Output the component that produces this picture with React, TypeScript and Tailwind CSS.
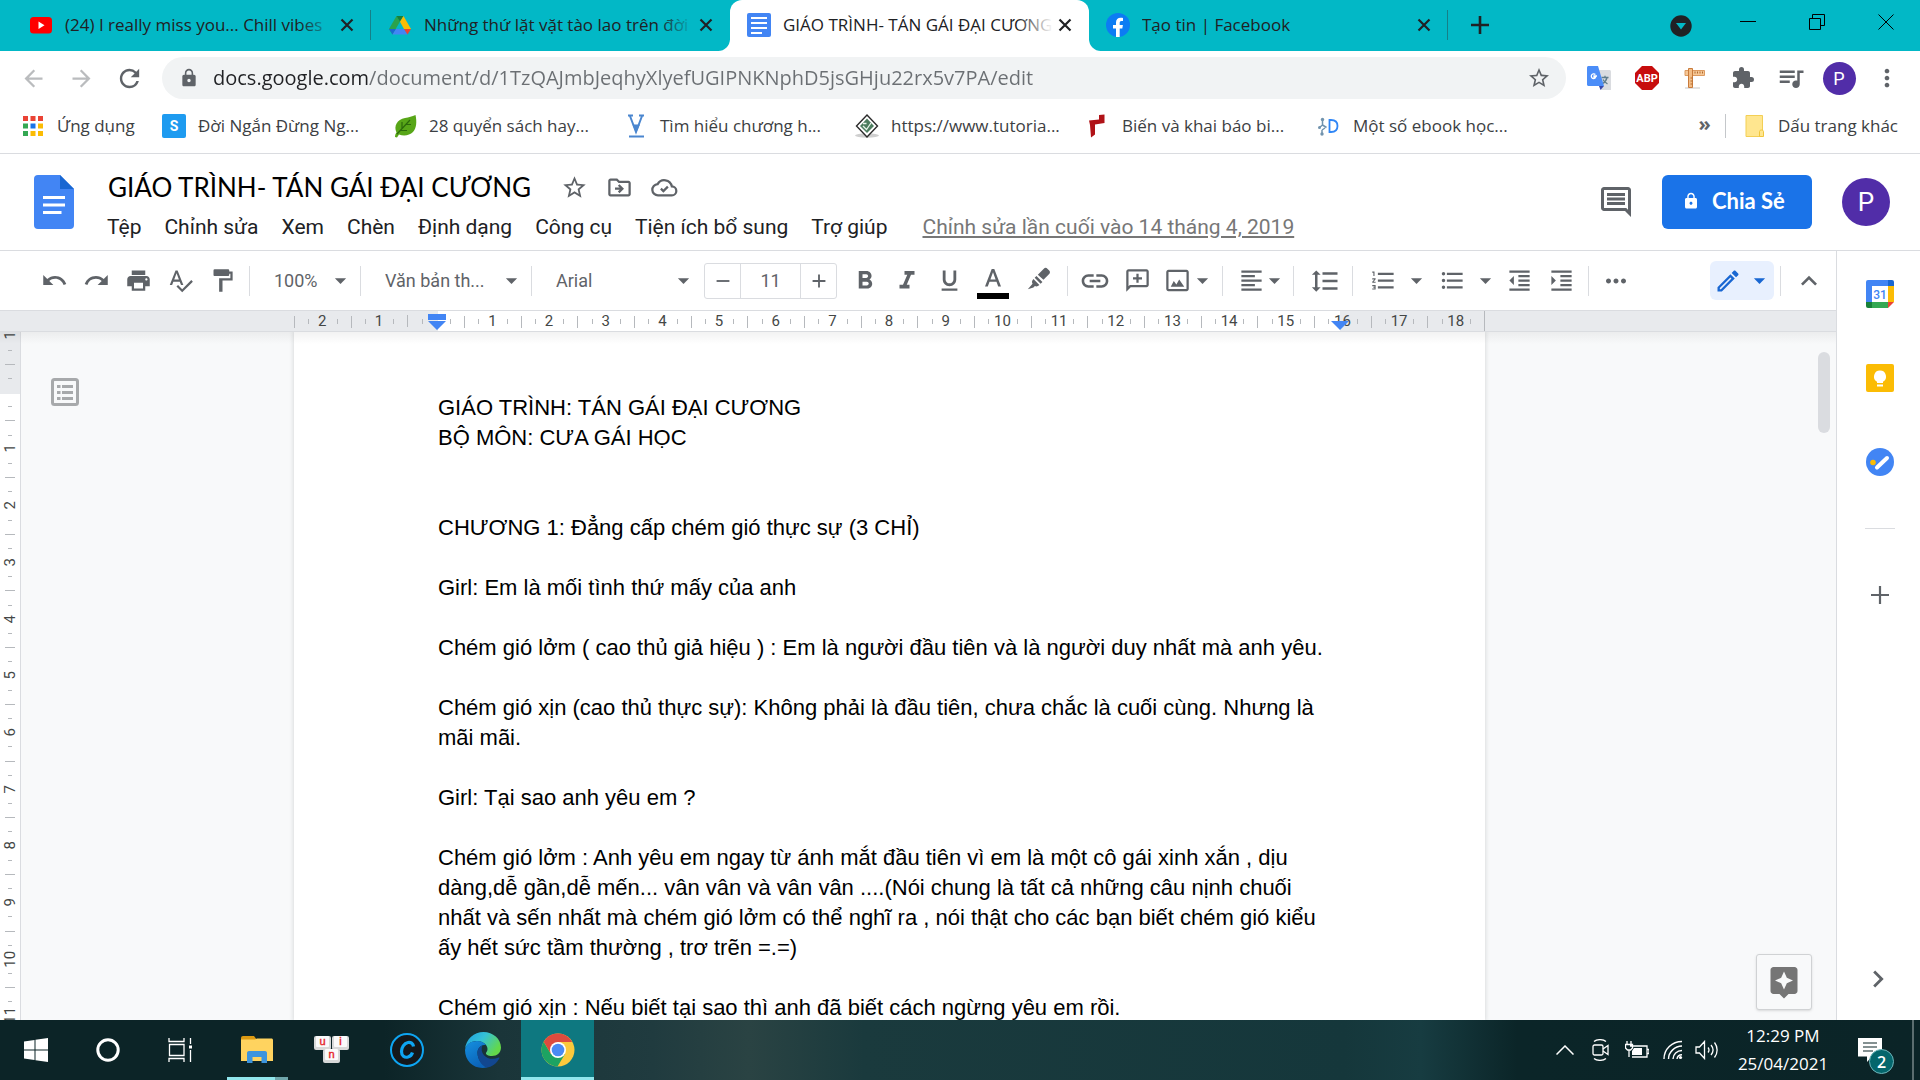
import React from "react";
import {
  MdAdd, MdArrowBack, MdArrowDropDown, MdArrowForward, MdAssistant, MdChevronRight, MdExpandLess,
  MdExtension, MdFormatAlignLeft, MdFormatBold, MdFormatIndentDecrease, MdFormatIndentIncrease, MdFormatItalic,
  MdFormatLineSpacing, MdFormatListBulleted, MdFormatListNumbered, MdFormatUnderlined, MdLink,
  MdLock, MdMoreHoriz, MdMoreVert, MdOutlineDriveFileMove, MdOutlineEdit,
  MdOutlineInsertComment, MdPrint, MdQueueMusic, MdRedo, MdRefresh, MdRemove, MdSpellcheck,
  MdStarBorder, MdUndo,
} from "react-icons/md";

const DocsMark = ({ className }: { className?: string }) => (
  <svg viewBox="0 0 24 24" className={className}>
    <rect width="24" height="24" rx="2" fill="#4285f4" />
    <path d="M4 5h16M4 10h16M4 15h16M4 20h11" stroke="#fff" strokeWidth="2.2" />
  </svg>
);

const YouTube = () => (
  <svg viewBox="0 0 24 24" className="size-6">
    <rect x="1" y="4" width="22" height="16.500" rx="3.500" fill="#f00" />
    <path d="M9.500 8.500v7.500l6-3.750z" fill="#fff" />
  </svg>
);

const Drive = () => (
  <svg viewBox="0 0 24 24" className="size-6">
    <path d="M8.500 3 1 16l3.500 5.500L12 8.500z" fill="#2ba24c" />
    <path d="M8.500 3h7L12 8.800z" fill="#188038" />
    <path d="M15.500 3 23 16h-7L12 8.800z" fill="#fbbc04" />
    <path d="M1 16h7l-3.500 5.500z" fill="#1967d2" />
    <path d="M8 16h8l3.500 5.500h-15z" fill="#4285f4" />
    <path d="M16 16h7l-3.500 5.500z" fill="#ea4335" />
  </svg>
);

const Facebook = () => (
  <svg viewBox="0 0 24 24" className="size-6">
    <circle cx="12" cy="12" r="12" fill="#0c7cf3" />
    <path d="M10 24v-8.500H7V12h3V9.500C10 6.300 11.800 4.700 14.600 4.700c1.200 0 2.400.2 2.400.2v3h-1.500c-1.400 0-1.800.9-1.800 1.800V12h3.200l-.6 3.500h-2.600V24z" fill="#fff" />
  </svg>
);

const tabs = [
  { title: "(24) I really miss you... Chill vibes", icon: <YouTube />, fade: "to-[#02b8c6]" },
  { title: "Những thứ lặt vặt tào lao trên đời", icon: <Drive />, fade: "to-[#02b8c6]" },
  { title: "GIÁO TRÌNH- TÁN GÁI ĐẠI CƯƠNG", icon: <DocsMark className="size-6" />, active: true, fade: "to-white" },
  { title: "Tạo tin | Facebook", icon: <Facebook />, fade: "to-[#02b8c6]" },
];

function TabStrip() {
  return (
    <div className="flex h-[51px] shrink-0 items-stretch bg-[#02b8c6] pl-3 text-[#202124]">
      {tabs.map((t, i) => (
        <div
          key={t.title}
          className={
            t.active
              ? "relative flex w-[359px] shrink items-center rounded-t-[12px] bg-white pr-[12px] pb-px pl-[17px] before:absolute before:bottom-0 before:-left-3 before:size-3 before:rounded-br-[12px] before:shadow-[4px_4px_0_3px_white] before:[clip-path:inset(0)] after:absolute after:-right-3 after:bottom-0 after:size-3 after:rounded-bl-[12px] after:shadow-[-4px_4px_0_3px_white] after:[clip-path:inset(0)]"
              : "flex w-[359px] shrink items-center pr-[12px] pb-px pl-[17px]"
          }
        >
          {t.icon}
          <span className="relative ml-3 min-w-0 flex-1 overflow-hidden pb-px text-[17px] leading-6 whitespace-nowrap">
            {t.title}
            <span className={"absolute inset-y-0 right-0 w-9 bg-linear-to-r from-transparent " + t.fade} />
          </span>
          <button aria-label="Đóng thẻ" className="grid size-6 place-items-center">
            <svg viewBox="0 0 14 14" className="size-[14px]"><path d="M1.500 1.500l11 11M12.500 1.500l-11 11" stroke="#202124" strokeWidth="2.200" /></svg>
          </button>
          {(i === 0 || i === 3) && <span className="-mr-3 ml-[11px] h-[30px] w-px bg-[#167f88]" />}
        </div>
      ))}
      <button aria-label="Thẻ mới" className="ml-[15px] grid w-[34px] place-items-center pb-px">
        <svg viewBox="0 0 20 20" className="size-5"><path d="M10 1v18M1 10h18" stroke="#202124" strokeWidth="2.600" /></svg>
      </button>
      <div className="ml-auto flex items-stretch">
        <button aria-label="Tìm kiếm thẻ" className="grid w-16 place-items-center">
          <svg viewBox="0 0 22 22" className="size-[22px]"><circle cx="11" cy="11" r="10.700" fill="#202124" /><path d="M6 8h10l-5 6.500z" fill="#02b8c6" /></svg>
        </button>
        <button aria-label="Thu nhỏ" className="grid w-[69px] place-items-center pb-2">
          <svg viewBox="0 0 16 16" className="size-4"><path d="M0 7.500h16" stroke="#000" /></svg>
        </button>
        <button aria-label="Khôi phục" className="grid w-[69px] place-items-center pb-2">
          <svg viewBox="0 0 16 16" className="size-4" fill="none"><path d="M.5 4.500h11v11H.5zM3.500 4V.5h12v11H12" stroke="#000" /></svg>
        </button>
        <button aria-label="Đóng" className="grid w-[69px] place-items-center pb-2">
          <svg viewBox="0 0 16 16" className="size-4"><path d="M.5.5l15 15M15.500.5l-15 15" stroke="#000" /></svg>
        </button>
      </div>
    </div>
  );
}

const Translate = () => (
  <svg viewBox="0 0 24 24" className="size-6">
    <path d="M10 4h12.500c.8 0 1.500.7 1.500 1.500V24H14z" fill="#dadce0" />
    <path d="M14.500 11.500h7M18 9.800v1.700M20 11.500c-.6 3-2.500 5-4.700 6.300M16 13.500c.8 1.900 2.500 3.300 4.500 4.500" stroke="#607d8b" strokeWidth="1.300" fill="none" />
    <path d="M12 20h5l-3.500 4z" fill="#3949ab" />
    <path d="M1.500 0H11l6 20H1.500C.7 20 0 19.300 0 18.500v-17C0 .7.7 0 1.500 0z" fill="#4b8df8" />
    <path d="M10 10H7v1.400h1.500c-.2.700-.8 1.200-1.700 1.200a2.400 2.400 0 1 1 1.600-4.100" stroke="#fff" strokeWidth="1.300" fill="none" />
  </svg>
);

const ABP = () => (
  <svg viewBox="0 0 24 24" className="size-6">
    <path d="M7 0h10l7 7v10l-7 7H7l-7-7V7z" fill="#c70d0d" />
    <text x="12" y="16" textAnchor="middle" fontSize="11" fontWeight="700" fill="#fff" fontFamily="Roboto, sans-serif">ABP</text>
  </svg>
);

const Ruler = () => (
  <svg viewBox="0 0 24 24" className="size-6">
    <path d="M2 22h15" stroke="#e2e2e2" strokeWidth="2" />
    <path d="M2 4.500h19.500v5H2z" fill="#f6c795" stroke="#dc9a60" />
    <path d="M5.500 2.500h4v19h-4z" fill="#f3bd86" stroke="#c97b3b" />
    <path d="M12 5.500v2M14.500 5.500v2M17 5.500v2M19.500 5.500v2M7.500 12h2M7.500 15h2M7.500 18h2" stroke="#b06a2e" />
  </svg>
);

function AddressBar() {
  const nav = "grid size-12 place-items-center";
  return (
    <div className="flex h-[54px] shrink-0 items-center bg-white px-[9px] text-[#5f6368]">
      <button aria-label="Quay lại" className={nav}><MdArrowBack className="size-[27px] text-[#babcbe]" /></button>
      <button aria-label="Tiến" className={nav}><MdArrowForward className="size-[27px] text-[#babcbe]" /></button>
      <button aria-label="Tải lại" className={nav}><MdRefresh className="size-[29px]" /></button>
      <div className="mx-[9px] flex h-[42px] min-w-0 flex-1 items-center rounded-full bg-[#f1f3f4] pr-[15px] pl-[17px]">
        <MdLock className="size-5" />
        <input
          aria-label="Địa chỉ"
          readOnly
          value="docs.google.com/document/d/1TzQAJmbJeqhyXlyefUGIPNKNphD5jsGHju22rx5v7PA/edit"
          className="ml-[14px] min-w-0 flex-1 bg-[linear-gradient(to_right,#202124_156px,#6b6f73_156px)] bg-clip-text text-[20px] text-transparent outline-none"
        />
        <button aria-label="Đánh dấu trang"><MdStarBorder className="size-6" /></button>
      </div>
      <button aria-label="Google Dịch" className={nav}><Translate /></button>
      <button aria-label="Adblock Plus" className={nav}><ABP /></button>
      <button aria-label="Thước đo" className={nav}><Ruler /></button>
      <button aria-label="Tiện ích" className={nav}><MdExtension className="size-6" /></button>
      <button aria-label="Phương tiện" className={nav}><MdQueueMusic className="size-[30px]" /></button>
      <button aria-label="Hồ sơ" className={nav}>
        <span className="grid size-[33px] place-items-center rounded-full bg-[#512da8] font-[Roboto,sans-serif] text-[18px] text-white">P</span>
      </button>
      <button aria-label="Trình đơn" className={nav}><MdMoreVert className="size-7" /></button>
    </div>
  );
}

const AppsGrid = () => (
  <svg viewBox="0 0 24 24" className="size-6">
    {["#ea4335", "#ea4335", "#ea4335", "#34a853", "#1a73e8", "#fbbc04", "#34a853", "#fbbc04", "#fbbc04"].map((c, i) => (
      <rect key={i} x={2 + (i % 3) * 7.5} y={2 + Math.floor(i / 3) * 7.5} width="5" height="5" fill={c} />
    ))}
  </svg>
);

const SMark = () => (
  <svg viewBox="0 0 24 24" className="size-6">
    <rect width="24" height="24" rx="2" fill="#1e9bf0" />
    <text x="12" y="17" textAnchor="middle" fontSize="14" fontWeight="700" fill="#fff" fontFamily="Roboto, sans-serif">S</text>
  </svg>
);

const Leaf = () => (
  <svg viewBox="0 0 24 24" className="size-6">
    <path d="M2 23c0-2 .5-3 1.500-4.500C.5 12 4 5.500 12 4c4-.8 7-1.500 10.500-3C24 8 23.500 14 20 18c-3.500 3.500-9 4.500-14 2.500L4 23.500z" fill="#58a618" />
    <path d="M4 20 17 6M9 8v7M7.500 16.500h6.500M13 10.500h5" stroke="#2c6a0b" strokeWidth="1.200" fill="none" />
  </svg>
);

const VMark = () => (
  <svg viewBox="0 0 24 24" className="size-6" fill="none">
    <path d="M4 1.500h5M15 1.500h5M6 2l6 16 6-16M5 22.500h15" stroke="#4a86cf" strokeWidth="2" />
    <path d="M8.500 10.500h7.500L12 19z" fill="#4a86cf" />
  </svg>
);

const Tutorial = () => (
  <svg viewBox="0 0 24 24" className="size-6">
    <ellipse cx="12" cy="21.500" rx="12" ry="2.200" fill="#cfcfcf" />
    <path d="M12 1 22.500 12 12 23 1.500 12z" fill="#fff" stroke="#2b2b2b" strokeWidth="1.400" />
    <path d="M12 4.500 19 12l-7 7-7-7z" fill="#4d7d5f" />
    <path d="M8 12l3.500 3.500L16 9M8 9.500h3.500" stroke="#e8f3ea" strokeWidth="1.300" fill="none" />
  </svg>
);

const RedMark = () => (
  <svg viewBox="0 0 24 24" className="size-6">
    <path d="M3 6.500l10-1V1l5.500-.5V9L9 10.500v10L5 23.500 4 11z" fill="#b01217" />
  </svg>
);

const DMark = () => (
  <svg viewBox="0 0 24 24" className="size-6" fill="none">
    <path d="M12.500 6h1.500c4.500 0 6.500 2 6.500 6s-2 6-6.500 6h-1.500z" stroke="#2f86f6" strokeWidth="1.800" />
    <path d="M5.500 6v5l-3 2.500M5 16v4M5.500 11l4 2.500M5 16l3-2" stroke="#7193ad" strokeWidth="1.500" />
    <g fill="#7193ad"><circle cx="5.500" cy="5.500" r="1.700" /><circle cx="2.500" cy="13.500" r="1.500" /><circle cx="5" cy="20" r="1.700" /></g>
  </svg>
);

const Folder = () => (
  <svg viewBox="0 0 24 24" className="size-6">
    <path d="M4 1.500h16.500v21H4z" fill="#ffe68f" stroke="#f3cf55" />
    <path d="M17.500 17.500c0-2 4-2 4 0v5h-4z" fill="#ffe68f" stroke="#f0c63d" />
  </svg>
);

const bookmarks = [
  { label: "Đời Ngắn Đừng Ng...", icon: <SMark /> },
  { label: "28 quyển sách hay...", icon: <Leaf /> },
  { label: "Tìm hiểu chương h...", icon: <VMark /> },
  { label: "https://www.tutoria...", icon: <Tutorial /> },
  { label: "Biến và khai báo bi...", icon: <RedMark /> },
  { label: "Một số ebook học...", icon: <DMark /> },
];

function Bookmarks() {
  return (
    <nav aria-label="Dấu trang" className="flex h-[49px] shrink-0 items-center border-b border-[#dadce0] bg-white pb-[6px] pl-[21px] text-[17px] whitespace-nowrap text-[#3c4043]">
      <a href="#apps" className="flex w-[141px] items-center gap-3"><AppsGrid />Ứng dụng</a>
      {bookmarks.map((b) => (
        <a key={b.label} href="#bookmark" className="flex w-[231px] items-center gap-3">{b.icon}{b.label}</a>
      ))}
      <button aria-label="Dấu trang khác nữa" className="ml-auto px-[14px] pb-1 text-[20px] leading-6 font-bold text-[#5f6368]">»</button>
      <span className="h-6 w-px bg-[#c4c7ca]" />
      <a href="#other" className="mr-[22px] ml-[16px] flex items-center gap-3"><Folder />Dấu trang khác</a>
    </nav>
  );
}

const menus = ["Tệp", "Chỉnh sửa", "Xem", "Chèn", "Định dạng", "Công cụ", "Tiện ích bổ sung", "Trợ giúp"];

function DocHeader() {
  return (
    <header className="flex h-[97px] shrink-0 items-start border-b border-[#dadce0] bg-white pt-[21px] pl-[34px] font-[Roboto,sans-serif] text-[#202124]">
      <a href="#home" aria-label="Trang chủ Tài liệu">
        <svg viewBox="0 0 40 54" className="h-[54px] w-10">
          <path d="M4 0h22l14 14v36a4 4 0 0 1-4 4H4a4 4 0 0 1-4-4V4a4 4 0 0 1 4-4z" fill="#4285f4" />
          <path d="M26 0l14 14H26z" fill="#1967d2" />
          <path d="M9 22.500h22M9 30h22M9 37.500h18.500" stroke="#fff" strokeWidth="2.800" />
        </svg>
      </a>
      <div className="-mt-[7px] ml-[33px] min-w-0 flex-1">
        <div className="flex h-[38px] items-center gap-[18px] text-[#5f6368]">
          <input aria-label="Tên tài liệu" defaultValue="GIÁO TRÌNH- TÁN GÁI ĐẠI CƯƠNG" className="field-sizing-content pl-px font-[Lato,sans-serif] text-[26px] text-black outline-none" />
          <button aria-label="Gắn dấu sao" className="ml-3"><MdStarBorder className="size-[27px]" /></button>
          <button aria-label="Di chuyển"><MdOutlineDriveFileMove className="size-[27px]" /></button>
          <button aria-label="Trạng thái tài liệu">
            <svg viewBox="0 0 24 24" className="size-[27px]" fill="none" stroke="currentColor" strokeWidth="2">
              <path d="M18.500 19H6.500a5 5 0 0 1-.6-10A6.800 6.800 0 0 1 18.500 11a4 4 0 0 1 0 8z" />
              <path d="M8.800 13l2.200 2.200 4-4" />
            </svg>
          </button>
        </div>
        <div className="mt-[7px] flex items-center gap-[23px] text-[21px] leading-7 whitespace-nowrap">
          {menus.map((m) => <button key={m}>{m}</button>)}
          <a href="#history" className="ml-3 text-[#777] underline underline-offset-2">Chỉnh sửa lần cuối vào 14 tháng 4, 2019</a>
        </div>
      </div>
      <div className="flex h-[54px] items-center pr-[30px]">
        <button aria-label="Nhận xét" className="mr-[28px] text-[#5f6368]"><MdOutlineInsertComment className="size-9" /></button>
        <button className="mr-[30px] flex h-[54px] w-[150px] items-center gap-3 rounded-[6px] bg-[#1a73e8] pb-[3px] pl-5 font-[Lato,sans-serif] text-[22px] font-bold whitespace-nowrap text-white">
          <MdLock className="size-[18px]" />Chia Sẻ
        </button>
        <button aria-label="Tài khoản" className="grid size-12 place-items-center rounded-full bg-[#512da8] text-[26px] text-white">P</button>
      </div>
    </header>
  );
}

const Sep = () => <span className="mx-[6px] h-[30px] w-px shrink-0 bg-[#dadce0]" />;
const Caret = ({ className = "" }: { className?: string }) => <MdArrowDropDown className={"size-[27px] shrink-0 " + className} />;

function Tool({ label, className = "w-[42px] justify-center", children }: { label: string; className?: string; children: React.ReactNode }) {
  return <button aria-label={label} className={"flex h-9 shrink-0 items-center " + className}>{children}</button>;
}

function Picker({ label, value, className }: { label: string; value: string; className: string }) {
  return (
    <label className={"relative flex h-9 shrink-0 items-center justify-end " + className}>
      <select aria-label={label} className="absolute inset-0 w-full appearance-none pl-[18px] outline-none">
        <option>{value}</option>
      </select>
      <span className="pointer-events-none relative"><Caret /></span>
    </label>
  );
}

function Toolbar() {
  const i = "size-[27px] shrink-0";
  return (
    <div className="flex h-[60px] shrink-0 items-center border-b border-[#dadce0] bg-white pr-[5px] pl-[33px] font-[Roboto,sans-serif] text-[18px] text-[#5f6368]">
      <Tool label="Hủy"><MdUndo className={i} /></Tool>
      <Tool label="Làm lại"><MdRedo className={i} /></Tool>
      <Tool label="In"><MdPrint className={i} /></Tool>
      <Tool label="Kiểm tra chính tả"><MdSpellcheck className={i} /></Tool>
      <Tool label="Sơn định dạng">
        <svg viewBox="0 0 24 24" className={i} fill="currentColor"><path d="M18 4V3a1 1 0 0 0-1-1H5a1 1 0 0 0-1 1v4c0 .6.500 1 1 1h12a1 1 0 0 0 1-1V6h1v4H9v12h3V12h9V4z" /></svg>
      </Tool>
      <Sep />
      <Picker label="Thu phóng" value="100%" className="w-[98px]" />
      <Sep />
      <Picker label="Kiểu" value="Văn bản th..." className="w-[158px]" />
      <Sep />
      <Picker label="Phông chữ" value="Arial" className="mr-[7px] w-[159px]" />
      <div className="flex h-9 w-[133px] shrink-0 items-center divide-x divide-[#dadce0] rounded-[3px] border border-[#dadce0]">
        <button aria-label="Giảm cỡ chữ" className="grid h-full w-[36px] place-items-center"><MdRemove className="size-[22px]" /></button>
        <input aria-label="Cỡ chữ" defaultValue="11" className="h-full w-[60px] text-center outline-none" />
        <button aria-label="Tăng cỡ chữ" className="grid h-full flex-1 place-items-center"><MdAdd className="size-[22px]" /></button>
      </div>
      <span className="w-[7px]" />
      <Tool label="Đậm"><MdFormatBold className="size-[30px]" /></Tool>
      <Tool label="Nghiêng"><MdFormatItalic className="size-[30px]" /></Tool>
      <Tool label="Gạch chân"><MdFormatUnderlined className={i} /></Tool>
      <Tool label="Màu văn bản" className="w-[45px] justify-center">
        <svg viewBox="0 0 34 36" className="h-9 w-[34px]">
          <path d="M9 23.500 15.700 6h2.600L25 23.500h-2.800l-1.700-4.700h-7l-1.700 4.700zM14.400 16.400h5.200L17 9.200z" fill="#5f6368" />
          <path d="M1 30h32v6H1z" fill="#000" />
        </svg>
      </Tool>
      <Tool label="Màu đánh dấu" className="w-[46px] justify-center pb-1">
        <svg viewBox="0 0 24 24" className={i} fill="currentColor"><path d="M2.500 21.500l4.200-4.800c-.9-1.300-.5-2.900.8-4.200l5.300 5.300c-1.300 1.300-2.800 1.600-4 .9l-1.300 1.400zM8.600 11.400l1.600-1.600 5.300 5.300-1.600 1.600zM11.400 8.600l5.300-5.300c1-1 2.300-1 3.200 0l1.600 1.600c.9.900.9 2.200 0 3.200l-5.100 5.100z" /></svg>
      </Tool>
      <Sep />
      <Tool label="Chèn liên kết"><MdLink className="size-8" /></Tool>
      <Tool label="Thêm nhận xét">
        <svg viewBox="0 0 24 24" className={i} fill="currentColor"><path d="M4 2h16c1.100 0 2 .9 2 2v12c0 1.100-.9 2-2 2H6l-4 4V4c0-1.100.9-2 2-2zm0 2v13.200L5.200 16H20V4zM11 6h2v3h3v2h-3v3h-2v-3H8V9h3z" /></svg>
      </Tool>
      <Tool label="Chèn hình ảnh" className="w-[58px] pl-[6px]">
        <svg viewBox="0 0 24 24" className={i} fill="currentColor"><path d="M20 2.500H4c-1.100 0-2 .9-2 2v15c0 1.100.9 2 2 2h16c1.100 0 2-.9 2-2v-15c0-1.100-.9-2-2-2zm0 17H4v-15h16zM6 17.500l2.700-5 2.300 3 2.500-4.500 4.500 6.500z" /></svg>
        <Caret className="-ml-[2px]" />
      </Tool>
      <Sep />
      <Tool label="Căn chỉnh" className="w-[58px] pl-[9px]"><MdFormatAlignLeft className={i} /><Caret className="-ml-1" /></Tool>
      <Sep />
      <Tool label="Khoảng cách dòng" className="w-[46px] justify-center pl-1"><MdFormatLineSpacing className="size-[30px]" /></Tool>
      <Sep />
      <Tool label="Danh sách đánh số" className="w-[70px] pl-[11px]"><MdFormatListNumbered className={i} /><Caret className="ml-[6px]" /></Tool>
      <Tool label="Danh sách dấu đầu dòng" className="w-[69px] pl-[10px]"><MdFormatListBulleted className={i} /><Caret className="ml-[6px]" /></Tool>
      <Tool label="Giảm thụt lề"><MdFormatIndentDecrease className={i} /></Tool>
      <Tool label="Tăng thụt lề"><MdFormatIndentIncrease className={i} /></Tool>
      <Sep />
      <Tool label="Thêm"><MdMoreHoriz className="size-[30px]" /></Tool>
      <button aria-label="Chế độ chỉnh sửa" className="ml-auto flex h-[39px] w-16 shrink-0 items-center justify-center gap-1 rounded-[6px] bg-[#e8f0fe] pl-[2px] text-[#1967d2]">
        <MdOutlineEdit className="size-[28px]" /><Caret />
      </button>
      <Sep />
      <Tool label="Ẩn trình đơn" className="w-11 justify-end"><MdExpandLess className="mr-[6px] size-[32px]" /></Tool>
    </div>
  );
}

const hLabels = Array.from({ length: 21 }, (_, i) => i - 2);
const vLabels = Array.from({ length: 13 }, (_, i) => i - 1);

function HorizontalRuler() {
  return (
    <div className="flex h-[21px] shrink-0 border-b border-[#dadce0] bg-[#e8eaed] pl-[294px] font-[Roboto,sans-serif] text-[15px] leading-5 text-[#444746]">
      <div className="relative flex w-[1191px] border-r border-[#b6b9bd] bg-[linear-gradient(to_right,transparent_144px,white_144px,white_1046px,transparent_1046px)]">
        {hLabels.map((n) => (
          <div key={n} className="grid flex-1 grid-cols-4 items-center">
            <span className="h-[12px] w-px bg-[#b6b9bd]" />
            <span className="h-[5px] w-px bg-[#b6b9bd]" />
            <span className="flex w-0 justify-center pb-px">{n === 0 ? "" : Math.abs(n)}</span>
            <span className="h-[5px] w-px bg-[#b6b9bd]" />
          </div>
        ))}
        <svg viewBox="0 0 18 16" className="absolute top-[3px] left-[134px] h-4 w-[18px]"><path d="M0 0h18v6H0zM0 7h18l-9 9z" fill="#4285f4" /></svg>
        <svg viewBox="0 0 18 9" className="absolute top-[10px] left-[1037px] h-[9px] w-[18px]"><path d="M0 0h18L9 9z" fill="#4285f4" /></svg>
      </div>
    </div>
  );
}

function VerticalRuler() {
  return (
    <div className="w-[21px] shrink-0 overflow-hidden border-r border-[#dadce0] bg-[linear-gradient(#e8eaed_62px,white_62px)] font-[Roboto,sans-serif] text-[15px] text-[#444746]">
      <div className="-mt-[25px] flex h-[737px] flex-col">
        {vLabels.map((n) => (
          <div key={n} className="grid flex-1 grid-rows-4 justify-items-center">
            <span className="h-px w-[10px] bg-[#b6b9bd]" />
            <span className="h-px w-1 bg-[#b6b9bd]" />
            <span className="flex h-0 items-center"><span className="-rotate-90">{n === 0 ? "" : Math.abs(n)}</span></span>
            <span className="h-px w-1 bg-[#b6b9bd]" />
          </div>
        ))}
      </div>
    </div>
  );
}

const paragraphs = [
  "GIÁO TRÌNH: TÁN GÁI ĐẠI CƯƠNG",
  "BỘ MÔN: CƯA GÁI HỌC",
  "",
  "",
  "CHƯƠNG 1: Đẳng cấp chém gió thực sự (3 CHỈ)",
  "",
  "Girl: Em là mối tình thứ mấy của anh",
  "",
  "Chém gió lởm ( cao thủ giả hiệu ) : Em là người đầu tiên và là người duy nhất mà anh yêu.",
  "",
  "Chém gió xịn (cao thủ thực sự): Không phải là đầu tiên, chưa chắc là cuối cùng. Nhưng là mãi mãi.",
  "",
  "Girl: Tại sao anh yêu em ?",
  "",
  "Chém gió lởm : Anh yêu em ngay từ ánh mắt đầu tiên vì em là một cô gái xinh xắn , dịu dàng,dễ gần,dễ mến... vân vân và vân vân ....(Nói chung là tất cả những câu nịnh chuối nhất và sến nhất mà chém gió lởm có thể nghĩ ra , nói thật cho các bạn biết chém gió kiểu ấy hết sức tầm thường , trơ trẽn =.=)",
  "",
  "Chém gió xịn : Nếu biết tại sao thì anh đã biết cách ngừng yêu em rồi.",
];

function Canvas() {
  return (
    <div className="relative flex min-h-0 flex-1 overflow-hidden bg-[#f8f9fa]">
      <VerticalRuler />
      <div className="w-[273px] shrink-0 pt-[46px] pl-[30px]">
        <button aria-label="Hiện đường viền tài liệu">
          <svg viewBox="0 0 28 28" className="size-7" fill="none" stroke="#a7a9ab">
            <rect x="1.500" y="1.500" width="25" height="25" rx="2" strokeWidth="3" />
            <path d="M6 8.500h3.500M11 8.500h11M6 14.500h3.500M11 14.500h11M6 20.500h3.500M11 20.500h11" strokeWidth="2.800" />
          </svg>
        </button>
      </div>
      <article className="w-[1191px] shrink-0 bg-white pt-[61px] pr-[150px] pl-[144px] font-['Liberation_Sans',Arial,sans-serif] text-[22px] leading-[30px] text-black shadow-[0_0_4px_1px_rgba(60,64,67,0.15)]">
        {paragraphs.map((p, i) => <p key={i} className="min-h-[30px]">{p}</p>)}
      </article>
      <div className="pointer-events-none absolute inset-x-0 top-0 h-3 bg-linear-to-b from-black/5 to-transparent" />
      <div className="absolute top-[20px] right-[6px] h-[81px] w-3 rounded-full bg-[#dadce0]" />
      <button aria-label="Khám phá" className="absolute right-6 bottom-[10px] grid size-14 place-items-center rounded-[3px] border border-[#d0d2d4] bg-[#f8f9fa] text-[#757575] shadow-sm">
        <MdAssistant className="size-9" />
      </button>
    </div>
  );
}

function SidePanel() {
  return (
    <aside className="flex w-[84px] shrink-0 flex-col items-center border-l border-[#dadce0] bg-white pt-[29px] pb-[24px] pl-[2px]">
      <button aria-label="Lịch">
        <svg viewBox="0 0 28 28" className="size-7">
          <path d="M0 2a2 2 0 0 1 2-2h20v6H6v16H0z" fill="#4285f4" />
          <path d="M22 0h4a2 2 0 0 1 2 2v4h-6z" fill="#1967d2" />
          <path d="M22 6h6v16h-6z" fill="#fbbc04" />
          <path d="M6 22h16v6H6z" fill="#34a853" />
          <path d="M0 22h6v6H2a2 2 0 0 1-2-2z" fill="#188038" />
          <path d="M22 22h6l-6 6z" fill="#ea4335" />
          <path d="M6 6h16v16H6z" fill="#fff" />
          <text x="14" y="18.500" textAnchor="middle" fontSize="12" fontWeight="500" fill="#4285f4" fontFamily="Roboto, sans-serif">31</text>
        </svg>
      </button>
      <button aria-label="Keep" className="mt-[56px]">
        <svg viewBox="0 0 28 28" className="size-7">
          <rect width="28" height="28" rx="2" fill="#fbbc04" />
          <path d="M14 6.500a6 6 0 0 0-3 11.200V19h6v-1.300a6 6 0 0 0-3-11.200zM11 20.500h6v2h-6z" fill="#fff" />
        </svg>
      </button>
      <button aria-label="Tasks" className="mt-[56px]">
        <svg viewBox="0 0 28 28" className="size-7">
          <circle cx="14" cy="14" r="14" fill="#4285f4" />
          <path d="M11 19.500 21 10" stroke="#fff" strokeWidth="4" strokeLinecap="round" />
          <circle cx="7" cy="14.500" r="2.800" fill="#fbbc04" />
        </svg>
      </button>
      <span className="mt-[52px] h-px w-[30px] bg-[#dadce0]" />
      <button aria-label="Tải tiện ích bổ sung" className="mt-[51px] text-[#5f6368]">
        <svg viewBox="0 0 30 30" className="size-[30px]"><path d="M15 6v18M6 15h18" stroke="currentColor" strokeWidth="2.200" /></svg>
      </button>
      <button aria-label="Ẩn bảng điều khiển bên" className="mt-auto mr-1 text-[#5f6368]"><MdChevronRight className="size-[34px]" /></button>
    </aside>
  );
}

const slot = "grid h-full shrink-0 place-items-center";

function Taskbar() {
  return (
    <footer className="flex h-[60px] shrink-0 items-center bg-[linear-gradient(to_right,#0c2427_0%,#0c2427_20%,#1a3539_26%,#203b3f_34%,#2a4343_39%,#1a3a3d_45%,#15373b_70%,#173c41_74%,#0b2528_79%,#0b2427_100%)] text-[17px] text-white">
      <button aria-label="Bắt đầu" className={slot + " w-[72px]"}>
        <svg viewBox="0 0 24 24" className="size-6" fill="#fff"><path d="M0 3.400 10.500 2v9.500H0zM11.500 1.800 24 0v11.500H11.500zM0 12.500h10.500V22L0 20.600zM11.500 12.500H24V24l-12.500-1.800z" /></svg>
      </button>
      <button aria-label="Cortana" className={slot + " w-[72px]"}>
        <svg viewBox="0 0 24 24" className="size-6" fill="none"><circle cx="12" cy="12" r="10.200" stroke="#fff" strokeWidth="3" /></svg>
      </button>
      <button aria-label="Chế độ xem tác vụ" className={slot + " w-[72px]"}>
        <svg viewBox="0 0 24 24" className="size-6" fill="none" stroke="#fff" strokeWidth="1.300"><path d="M1 0v3.500h15V0M1.500 6.500h14.500v11H1.500zM1 24v-3.500h15V24M22.500 0v6M22.500 12v12" /><path d="M21 7.500h3v3h-3z" fill="#fff" stroke="none" /></svg>
      </button>
      <button aria-label="Trình khám phá tệp" className={slot + " relative ml-[3px] w-[76px]"}>
        <svg viewBox="0 0 32 28" className="h-7 w-8">
          <path d="M0 2a2 2 0 0 1 2-2h11l3 4H0z" fill="#dc9a13" />
          <path d="M0 3.500h14l2-1h14.500c.8 0 1.500.7 1.500 1.500v21H0z" fill="#ffd35f" />
          <path d="M6 27V17c0-1.100.9-2 2-2h16c1.100 0 2 .9 2 2v10h-5.500v-6h-9v6z" fill="#3d94dd" />
        </svg>
        <span className="absolute bottom-0 left-2 flex h-[3px] w-[61px]"><span className="w-12 bg-[#91e6ec]" /><span className="flex-1 bg-[#6fa6ab]" /></span>
      </button>
      <button aria-label="UniKey" className={slot + " w-[74px]"}>
        <svg viewBox="0 0 36 28" className="h-7 w-9" fontFamily="Liberation Sans, sans-serif" fontSize="11">
          {[[0, 0, "u"], [18, 0, "i"], [9, 13, "n"]].map(([x, y, c]) => (
            <g key={c}>
              <rect x={Number(x)} y={Number(y)} width="17" height="14" rx="2" fill="#d8d8d8" />
              <rect x={Number(x) + 2} y={Number(y)} width="13" height="11" rx="1" fill="#fafafa" />
              <text x={Number(x) + 8.5} y={Number(y) + 9} textAnchor="middle" fill="#e5242a" stroke="#e5242a" strokeWidth="0.400">{c}</text>
            </g>
          ))}
        </svg>
      </button>
      <button aria-label="Cốc Cốc" className={slot + " w-[76px]"}>
        <svg viewBox="0 0 36 36" className="size-9" fill="none">
          <circle cx="18" cy="18" r="16" fill="#14181b" stroke="#0ea5f2" strokeWidth="2" />
          <path d="M24.500 14.500c-.3-3-2.800-4.500-5.500-4-4 .8-6.500 5-6.500 9 0 4.500 3 6.500 6.500 5.500 2.300-.6 3.800-2.200 4.500-4.500" stroke="#0ea5f2" strokeWidth="3.200" />
        </svg>
      </button>
      <button aria-label="Microsoft Edge" className={slot + " w-[76px]"}>
        <svg viewBox="0 0 36 36" className="size-9">
          <defs>
            <linearGradient id="edgeTop" x1="0" y1="0" x2="1" y2="0.500"><stop offset="0" stopColor="#1b9de2" /><stop offset="0.500" stopColor="#35c1d6" /><stop offset="1" stopColor="#63d84a" /></linearGradient>
            <linearGradient id="edgeLow" x1="0" y1="0" x2="0.500" y2="1"><stop offset="0" stopColor="#1590e0" /><stop offset="1" stopColor="#0b63b8" /></linearGradient>
          </defs>
          <path d="M0 17C1 7 9 0 18.500 0 28 0 36 7 36 15.500c0 5-4 8.500-9 8.500-4 0-6.500-1.500-6-3 .3-1 1.500-1.800 1.500-4C22.500 12 17 9 12 9S2 11.500 0 17z" fill="url(#edgeTop)" />
          <path d="M0 18C1 12 6 9 12 9c4 0 7 1.500 9 3.700-5 0-8.500 3.500-8.500 8C12.500 28 18 33 22 35.500 10 38 0 30 0 18z" fill="url(#edgeLow)" />
          <path d="M12.500 20.500c0-3.500 2-6 5-7.300-1.500 3.500-1 7 1.500 10 3.500 4 9.500 4.500 14.500 2.300.8-.3 1.300.3.800 1C31.500 31.500 27 35 21.500 35.700 16 33 12.500 27 12.500 20.500z" fill="#12478f" />
        </svg>
      </button>
      <button aria-label="Google Chrome" className={slot + " relative w-[73px] bg-[#0e7880]"}>
        <svg viewBox="0 0 34 34" className="size-[34px]">
          <circle cx="17" cy="17" r="16.500" fill="#fbc93c" />
          <path d="M2.700 8.700A16.500 16.500 0 0 0 16.500 33.500L24 21l-7-4-7 4z" fill="#1da362" />
          <path d="M2.700 8.700 10 21l7-12h14.300A16.500 16.500 0 0 0 2.700 8.700z" fill="#dd4b3e" />
          <circle cx="17" cy="17" r="8" fill="#fff" /><circle cx="17" cy="17" r="6.300" fill="#4a8af4" />
        </svg>
        <span className="absolute inset-x-0 bottom-0 h-[3px] bg-[#91e6ec]" />
      </button>
      <div className="ml-auto flex h-full items-center">
        <button aria-label="Biểu tượng ẩn" className={slot + " w-9"}>
          <svg viewBox="0 0 18 10" className="h-[10px] w-[18px]" fill="none"><path d="M.5 9.500 9 1l8.500 8.500" stroke="#fff" strokeWidth="1.500" /></svg>
        </button>
        <button aria-label="Họp ngay" className={slot + " w-9"}>
          <svg viewBox="0 0 18 22" className="h-[22px] w-[18px]" fill="none" stroke="#fff" strokeWidth="1.300"><path d="M2 2.500C5 0 11 0 14 2.500M2 19.500c3 2.500 9 2.500 12 0" /><rect x="1" y="6" width="10" height="10" rx="1.500" /><path d="M11 10l5-3.500v9L11 12" /></svg>
        </button>
        <button aria-label="Pin" className={slot + " w-9"}>
          <svg viewBox="0 0 24 18" className="h-[18px] w-6" fill="none" stroke="#fff" strokeWidth="1.300"><path d="M5 5h17v11H7M22.500 8.500H24v4h-1.500M2 0v3M6 0v3M.5 3.500h7V7L5.500 9h-3L.5 7zM4 9v7" /><path d="M9 7h8v7H7v-4z" fill="#fff" stroke="none" /></svg>
        </button>
        <button aria-label="Mạng" className={slot + " w-9"}>
          <svg viewBox="0 0 20 20" className="size-5" fill="none" stroke="#fff" strokeWidth="1.400"><path d="M1 19C1 9 9 1.500 19 1.500M5.500 19C5.500 12 12 6 19 6M10 19c0-4.500 4-8.500 9-8.500M14 19c.3-2.500 2.300-4.300 5-4.300" /><circle cx="17.500" cy="17.500" r="1.600" fill="#fff" stroke="none" /></svg>
        </button>
        <button aria-label="Âm lượng" className={slot + " w-8"}>
          <svg viewBox="0 0 24 20" className="h-5 w-6" fill="none" stroke="#fff" strokeWidth="1.300"><path d="M1 7h3.500L9.500 1.500v17L4.500 13H1zM13 7.500c1.200 1.500 1.200 3.500 0 5M16 5c2.500 3 2.500 7 0 10M19.500 2.500c3.500 4.500 3.500 10.500 0 15" /></svg>
        </button>
        <button className="h-full w-[120px] text-center leading-7">
          <span className="block">12:29 PM</span>
          <span className="block">25/04/2021</span>
        </button>
        <button aria-label="Thông báo" className={slot + " relative w-[69px]"}>
          <svg viewBox="0 0 24 24" className="-ml-4 size-6"><path d="M0 0h24v18.500H14L9 24v-5.500H0z" fill="#fff" /><path d="M5 5h14M5 9h14M5 13h10" stroke="#0b2427" strokeWidth="1.200" /></svg>
          <span className="absolute right-[18px] bottom-[6px] grid size-[25px] place-items-center rounded-full border border-[#6fb5ba] bg-[#04666c] text-[16px] leading-none font-semibold">2</span>
        </button>
        <span className="mr-[6px] h-full w-[2px] bg-[#5b6d6f]" />
      </div>
    </footer>
  );
}

export default function App() {
  return (
    <div className="flex h-screen min-w-0 flex-col overflow-hidden bg-white font-['Open_Sans','Noto_Sans',sans-serif]">
      <TabStrip />
      <AddressBar />
      <Bookmarks />
      <DocHeader />
      <main className="flex min-h-0 flex-1">
        <div className="flex min-w-0 flex-1 flex-col">
          <Toolbar />
          <HorizontalRuler />
          <Canvas />
        </div>
        <SidePanel />
      </main>
      <Taskbar />
    </div>
  );
}
